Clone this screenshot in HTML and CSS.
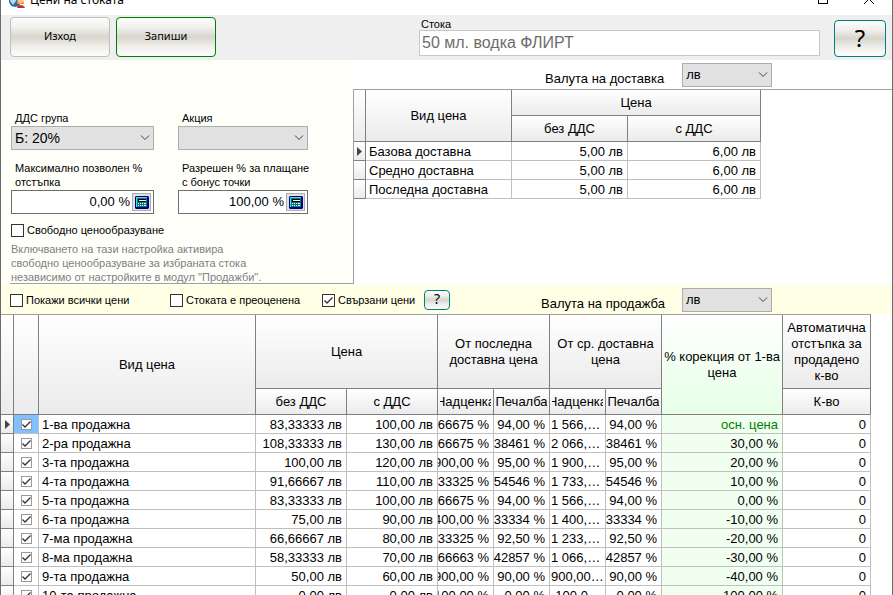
FILE: index.html
```html
<!DOCTYPE html>
<html lang="bg">
<head>
<meta charset="utf-8">
<title>Цени на стоката</title>
<link rel="stylesheet" href="styles.css">
</head>
<body>
<div class="window">
  <header class="titlebar">
    <svg class="app-icon" width="16" height="16" viewBox="0 0 16 16" aria-hidden="true">
      <circle cx="6" cy="9" r="6" fill="#2b6ca8"/>
      <path d="M1 9c2-4 5-5 7-5l-1 5-3 4z" fill="#bcd8ea"/>
      <path d="M8 7h6l1 5H8z" fill="#e8862e"/>
      <circle cx="11.500" cy="9" r="2.500" fill="#f6c28a"/>
      <path d="M8 16c0-4 7-4 8 0z" fill="#c9302c"/>
    </svg>
    <h1>Цени на стоката</h1>
    <button class="caption" type="button" aria-label="Максимизирай"><svg width="10" height="10" viewBox="0 0 10 10"><rect x=".5" y=".5" width="9" height="9" fill="none" stroke="#000"/></svg></button>
    <button class="caption" type="button" aria-label="Затвори"><svg width="10" height="10" viewBox="0 0 10 10"><path d="M0 0l10 10M10 0L0 10" stroke="#000"/></svg></button>
  </header>

  <div class="toolbar">
    <button class="glossy" type="button">Изход</button>
    <button class="glossy save" type="button">Запиши</button>
    <div class="item">
      <label for="item">Стока</label>
      <input id="item" type="text" value="50 мл. водка ФЛИРТ" readonly>
    </div>
    <button class="glossy help" type="button">?</button>
  </div>

  <main>
    <div class="upper">
      <section class="settings">
        <div class="fields">
          <div class="field">
            <label for="vat">ДДС група</label>
            <select id="vat"><option>Б: 20%</option></select>
          </div>
          <div class="field">
            <label for="promo">Акция</label>
            <select id="promo"><option></option></select>
          </div>
          <div class="field">
            <label for="maxdisc">Максимално позволен %<br>отстъпка</label>
            <div class="number">
              <input id="maxdisc" type="text" value="0,00 %">
              <button type="button" aria-label="Калкулатор"><svg width="14" height="13" viewBox="0 0 14 13"><path d="M1 0h12l1 1v11l-1 1H1l-1-1V1z" fill="#000080"/><path d="M1 1h11v10H1z" fill="#008080"/><path d="M1 1h11v1H2v9H1z" fill="#40e0e0"/><path d="M3 3h8v3H3z" fill="#000"/><path d="M4 4h7v1H4z" fill="#fff"/><path d="M3 7h1v1H3zm2 0h1v1H5zm2 0h1v1H7zm2 0h2v1H9zM3 9h1v1H3zm2 0h1v1H5zm2 0h1v1H7zm2 0h2v1H9z" fill="#fff"/></svg></button>
            </div>
          </div>
          <div class="field">
            <label for="bonus">Разрешен % за плащане<br>с бонус точки</label>
            <div class="number">
              <input id="bonus" type="text" value="100,00 %">
              <button type="button" aria-label="Калкулатор"><svg width="14" height="13" viewBox="0 0 14 13"><path d="M1 0h12l1 1v11l-1 1H1l-1-1V1z" fill="#000080"/><path d="M1 1h11v10H1z" fill="#008080"/><path d="M1 1h11v1H2v9H1z" fill="#40e0e0"/><path d="M3 3h8v3H3z" fill="#000"/><path d="M4 4h7v1H4z" fill="#fff"/><path d="M3 7h1v1H3zm2 0h1v1H5zm2 0h1v1H7zm2 0h2v1H9zM3 9h1v1H3zm2 0h1v1H5zm2 0h1v1H7zm2 0h2v1H9z" fill="#fff"/></svg></button>
            </div>
          </div>
        </div>
        <label class="check"><input type="checkbox"> Свободно ценообразуване</label>
        <p class="hint">Включването на тази настройка активира<br>свободно ценообразуване за избраната стока<br>независимо от настройките в модул "Продажби".</p>
      </section>

      <section class="delivery">
        <div class="currency">
          <label for="cur1">Валута на доставка</label>
          <select id="cur1"><option>лв</option></select>
        </div>
        <div class="delivery-grid">
          <table class="grid">
            <colgroup><col class="c-mark"><col class="c-kind"><col class="c-net"><col class="c-gross"></colgroup>
            <thead>
              <tr class="h-short"><th rowspan="2"></th><th rowspan="2">Вид цена</th><th colspan="2">Цена</th></tr>
              <tr class="h-short"><th>без ДДС</th><th>с ДДС</th></tr>
            </thead>
            <tbody>
              <tr><th class="current"></th><td class="name">Базова доставна</td><td>5,00 лв</td><td>6,00 лв</td></tr>
              <tr><th></th><td class="name">Средно доставна</td><td>5,00 лв</td><td>6,00 лв</td></tr>
              <tr><th></th><td class="name">Последна доставна</td><td>5,00 лв</td><td>6,00 лв</td></tr>
            </tbody>
          </table>
        </div>
      </section>
    </div>

    <div class="options">
      <label class="check"><input type="checkbox"> Покажи всички цени</label>
      <label class="check"><input type="checkbox"> Стоката е преоценена</label>
      <label class="check"><input type="checkbox" checked> Свързани цени</label>
      <button class="glossy help small" type="button">?</button>
      <div class="currency">
        <label for="cur2">Валута на продажба</label>
        <select id="cur2"><option>лв</option></select>
      </div>
    </div>

    <table class="grid sales">
      <colgroup><col class="s-mark"><col class="s-check"><col class="s-kind"><col class="s-price"><col class="s-price"><col class="s-pct"><col class="s-pct"><col class="s-pct"><col class="s-pct"><col class="s-corr"><col class="s-qty"></colgroup>
      <thead>
        <tr class="h-tall"><th rowspan="2"></th><th rowspan="2"></th><th rowspan="2">Вид цена</th><th colspan="2">Цена</th><th colspan="2">От последна доставна цена</th><th colspan="2">От ср. доставна цена</th><th rowspan="2" class="corr">% корекция от 1-ва цена</th><th>Автоматична отстъпка за продадено<br>к-во</th></tr>
        <tr class="h-short"><th>без ДДС</th><th>с ДДС</th><th><span class="clip mid">Надценка</span></th><th><span class="clip mid">Печалба</span></th><th><span class="clip mid">Надценка</span></th><th><span class="clip mid">Печалба</span></th><th>К-во</th></tr>
      </thead>
      <tbody>
        <tr><th class="current"></th><td class="tick selected"><input type="checkbox" checked aria-label="1-ва продажна"></td><td class="name">1-ва продажна</td><td>83,33333 лв</td><td>100,00 лв</td><td><span class="clip">1 566,66675 %</span></td><td><span class="clip">94,00 %</span></td><td><span class="dots">1 566,66675 %</span></td><td><span class="clip">94,00 %</span></td><td class="corr base">осн. цена</td><td>0</td></tr>
        <tr><th></th><td class="tick"><input type="checkbox" checked aria-label="2-ра продажна"></td><td class="name">2-ра продажна</td><td>108,33333 лв</td><td>130,00 лв</td><td><span class="clip">2 066,66675 %</span></td><td><span class="clip">95,38461 %</span></td><td><span class="dots">2 066,66675 %</span></td><td><span class="clip">95,38461 %</span></td><td class="corr">30,00 %</td><td>0</td></tr>
        <tr><th></th><td class="tick"><input type="checkbox" checked aria-label="3-та продажна"></td><td class="name">3-та продажна</td><td>100,00 лв</td><td>120,00 лв</td><td><span class="clip">1 900,00 %</span></td><td><span class="clip">95,00 %</span></td><td><span class="dots">1 900,00 %</span></td><td><span class="clip">95,00 %</span></td><td class="corr">20,00 %</td><td>0</td></tr>
        <tr><th></th><td class="tick"><input type="checkbox" checked aria-label="4-та продажна"></td><td class="name">4-та продажна</td><td>91,66667 лв</td><td>110,00 лв</td><td><span class="clip">1 733,33325 %</span></td><td><span class="clip">94,54546 %</span></td><td><span class="dots">1 733,33325 %</span></td><td><span class="clip">94,54546 %</span></td><td class="corr">10,00 %</td><td>0</td></tr>
        <tr><th></th><td class="tick"><input type="checkbox" checked aria-label="5-та продажна"></td><td class="name">5-та продажна</td><td>83,33333 лв</td><td>100,00 лв</td><td><span class="clip">1 566,66675 %</span></td><td><span class="clip">94,00 %</span></td><td><span class="dots">1 566,66675 %</span></td><td><span class="clip">94,00 %</span></td><td class="corr">0,00 %</td><td>0</td></tr>
        <tr><th></th><td class="tick"><input type="checkbox" checked aria-label="6-та продажна"></td><td class="name">6-та продажна</td><td>75,00 лв</td><td>90,00 лв</td><td><span class="clip">1 400,00 %</span></td><td><span class="clip">93,33334 %</span></td><td><span class="dots">1 400,00 %</span></td><td><span class="clip">93,33334 %</span></td><td class="corr">-10,00 %</td><td>0</td></tr>
        <tr><th></th><td class="tick"><input type="checkbox" checked aria-label="7-ма продажна"></td><td class="name">7-ма продажна</td><td>66,66667 лв</td><td>80,00 лв</td><td><span class="clip">1 233,33325 %</span></td><td><span class="clip">92,50 %</span></td><td><span class="dots">1 233,33325 %</span></td><td><span class="clip">92,50 %</span></td><td class="corr">-20,00 %</td><td>0</td></tr>
        <tr><th></th><td class="tick"><input type="checkbox" checked aria-label="8-ма продажна"></td><td class="name">8-ма продажна</td><td>58,33333 лв</td><td>70,00 лв</td><td><span class="clip">1 066,66663 %</span></td><td><span class="clip">91,42857 %</span></td><td><span class="dots">1 066,66663 %</span></td><td><span class="clip">91,42857 %</span></td><td class="corr">-30,00 %</td><td>0</td></tr>
        <tr><th></th><td class="tick"><input type="checkbox" checked aria-label="9-та продажна"></td><td class="name">9-та продажна</td><td>50,00 лв</td><td>60,00 лв</td><td><span class="clip">900,00 %</span></td><td><span class="clip">90,00 %</span></td><td><span class="dots">900,00 %</span></td><td><span class="clip">90,00 %</span></td><td class="corr">-40,00 %</td><td>0</td></tr>
        <tr><th></th><td class="tick"><input type="checkbox" checked aria-label="10-та продажна"></td><td class="name">10-та продажна</td><td>0,00 лв</td><td>0,00 лв</td><td><span class="clip">-100,00 %</span></td><td><span class="clip">0,00 %</span></td><td><span class="dots">-100,00 %</span></td><td><span class="clip">0,00 %</span></td><td class="corr">-100,00 %</td><td>0</td></tr>
      </tbody>
    </table>
  </main>
</div>
</body>
</html>
```
FILE: styles.css
```css
* { box-sizing: border-box; }

body {
  margin: 0;
  height: 100vh;
  overflow: hidden;
  background: #fff;
  color: #000;
  font: 13px/16px "Liberation Sans", Arial, sans-serif;
}

input, select, button { font: inherit; color: inherit; margin: 0; }

.window {
  min-height: 100vh;
  border: solid #6b6b70;
  border-width: 0 1px;
}

.titlebar {
  display: flex;
  align-items: center;
  height: 30px;
  margin-top: -15px;
  padding-left: 8px;
  background: #fff;
}
.app-icon { margin: 0 5px 0 0; }
.titlebar h1 {
  flex: 1;
  margin: 0;
  font: 12px/16px "Noto Sans", "Open Sans", sans-serif;
}
.caption {
  width: 46px;
  height: 30px;
  padding: 0;
  border: 0;
  background: none;
}

.toolbar {
  display: flex;
  align-items: flex-start;
  height: 45px;
  padding: 2px 6px 0 9px;
  background: #efefef;
}
.glossy {
  width: 100px;
  height: 40px;
  padding: 0 0 2px;
  border: 1px solid #bfbfbf;
  border-radius: 4px;
  background: linear-gradient(#fdfdfd, #f1f0ed 25%, #d8d5cc 50%, #efeeea 75%, #fdfdfd);
  font: 11px/16px "Noto Sans", "Open Sans", sans-serif;
}
.save { margin-left: 6px; border-color: #008000; }
.item { flex: 1; margin: 0 14px 0 203px; }
.item label {
  display: block;
  height: 13px;
  padding-left: 2px;
  font-size: 11px;
  line-height: 14px;
}
.item input {
  display: block;
  width: 100%;
  height: 26px;
  padding: 0 2px;
  border: 1px solid #c8c8c8;
  background: #fff;
  color: #6d6d6d;
  font-size: 16px;
}
.help {
  width: 52px;
  height: 37px;
  margin-top: 3px;
  border-color: #008080;
  font-size: 24px;
  line-height: 30px;
}

.upper { display: flex; height: 225px; background: #fffffa; }

select {
  appearance: none;
  display: block;
  width: 100%;
  height: 24px;
  padding: 0 20px 0 3px;
  border: 1px solid #adadad;
  border-radius: 0;
  background: #e1e1e1 url("data:image/svg+xml,%3Csvg xmlns='http://www.w3.org/2000/svg' width='10' height='6'%3E%3Cpath d='M1 .5l4 4 4-4' fill='none' stroke='%23444'/%3E%3C/svg%3E") no-repeat right 3px center;
}

.settings {
  width: 343px;
  height: 224px;
  margin-left: 9px;
  padding: 50px 0 0 1px;
  border-bottom: 1px solid #a0a0a0;
}
.fields {
  display: grid;
  grid-template-columns: 143px 130px;
  gap: 10px 24px;
}
.field label {
  display: block;
  padding: 1px 0 1px 4px;
  font-size: 11px;
  line-height: 14px;
  white-space: nowrap;
}
.field select { font-size: 14px; }
.number {
  display: flex;
  align-items: center;
  height: 24px;
  padding-right: 2px;
  border: 1px solid #6e6e6e;
  background: #fff;
}
.number input {
  flex: 1;
  min-width: 0;
  padding: 0 2px;
  border: 0;
  background: none;
  text-align: right;
}
.number button {
  display: grid;
  place-items: center;
  width: 19px;
  height: 18px;
  padding: 0;
  border: 1px solid #adadad;
  background: #e1e1e1;
}

.check {
  display: flex;
  align-items: center;
  gap: 3px;
  font-size: 11px;
  line-height: 14px;
  white-space: nowrap;
}
input[type="checkbox"] {
  appearance: none;
  flex: none;
  width: 13px;
  height: 13px;
  border: 1px solid #333;
  background: #fff;
}
input[type="checkbox"]:checked {
  background: #fff url("data:image/svg+xml,%3Csvg xmlns='http://www.w3.org/2000/svg' width='11' height='11'%3E%3Cpath d='M1.500 5.500l2.500 2.500 5.500-5.500' fill='none' stroke='%23333' stroke-width='1.300'/%3E%3C/svg%3E") center no-repeat;
}
.settings .check { margin-top: 9px; }
.hint {
  margin: 5px 0 0;
  color: #808080;
  font-size: 11px;
  line-height: 14px;
}

.delivery { flex: 1; background: #fff; }
.currency { display: flex; align-items: center; gap: 18px; }
.currency label { padding-top: 8px; }
.currency select { width: 90px; }
.delivery .currency { height: 29px; padding-left: 192px; }
.delivery-grid {
  height: 195px;
  border: solid #a0a0a0;
  border-width: 1px 0 0 1px;
}

.grid {
  table-layout: fixed;
  width: 0;
  border-collapse: separate;
  border-spacing: 0;
}
.grid th, .grid td {
  padding: 0 4px;
  border: solid #c0c0c0;
  border-width: 0 1px 1px 0;
  overflow: hidden;
}
.grid th {
  border-color: #808080;
  background: linear-gradient(#fff, #ebebeb);
  font-weight: normal;
}
.grid thead th { padding: 0 2px; }
.grid td { height: 19px; padding-top: 2px; line-height: 16px; text-align: right; white-space: nowrap; }
.grid td.name { padding-left: 3px; text-align: left; }
.grid tbody th { padding: 0; }
.grid th.current {
  background: url("data:image/svg+xml,%3Csvg xmlns='http://www.w3.org/2000/svg' width='5' height='9'%3E%3Cpath d='M0 0l5 4.500L0 9z' fill='%23444'/%3E%3C/svg%3E") center no-repeat, linear-gradient(#fff, #ebebeb);
}
.h-short { height: 26px; }
.h-tall { height: 74px; }
.c-mark { width: 12px; }
.c-kind { width: 146px; }
.c-net { width: 116px; }
.c-gross { width: 133px; }

.options {
  display: grid;
  grid-template-columns: 160px 152px 102px 26px 1fr;
  align-items: center;
  height: 29px;
  padding: 1px 0 0 9px;
  background: #ffffe6;
}
.small { width: 26px; height: 20px; margin: 0; font-size: 14px; line-height: 16px; }
.options .currency { padding-left: 91px; gap: 17px; }

.sales { background: #fff; }
main > .sales { border-top: 1px solid #a0a0a0; }
.s-mark { width: 13px; }
.s-check { width: 25px; }
.s-kind { width: 217px; }
.s-price { width: 91px; }
.s-pct { width: 56px; }
.s-corr { width: 121px; }
.s-qty { width: 88px; }

.grid td.tick { padding: 0; }
.tick input {
  display: block;
  width: 11px;
  height: 11px;
  margin: 0 auto;
  border-color: #999;
}
.selected { background: #80c0ff; }
.grid th.corr { background: linear-gradient(#fff, #e6ffe6); }
.grid td.corr { background: #f0fff0; }
.grid td.base { color: #008000; }

.clip { display: flex; justify-content: flex-end; overflow: hidden; white-space: nowrap; }
.clip.mid { justify-content: center; }
.grid td:has(.clip) { padding-left: 0; }
.dots { display: block; overflow: hidden; text-overflow: ellipsis; }
.grid td:has(.dots) { padding-left: 1px; padding-right: 1px; }
```
